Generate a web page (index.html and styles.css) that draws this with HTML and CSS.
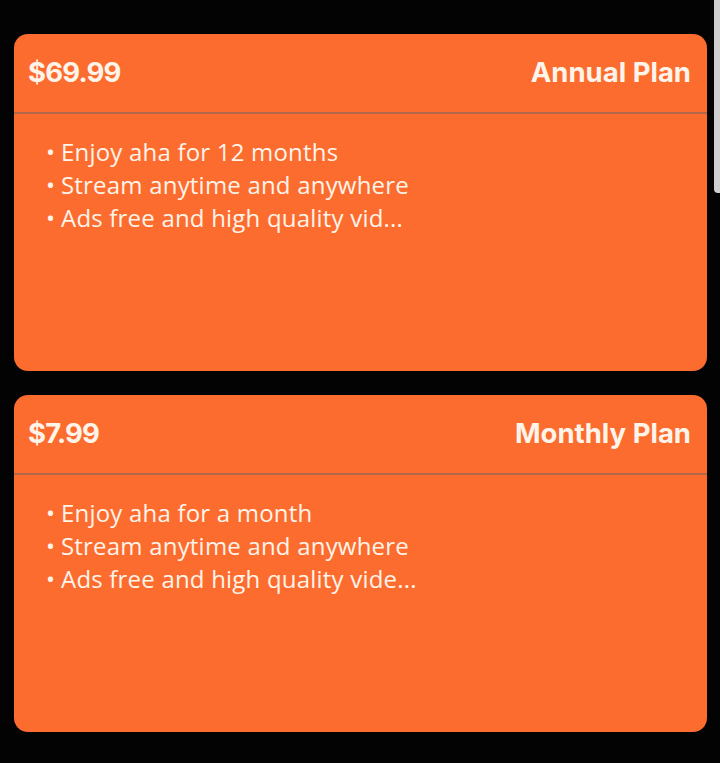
FILE: index.html
```html
<!DOCTYPE html>
<html lang="en">

<head>
    <meta charset="UTF-8">
    <meta name="viewport" content="width=device-width, initial-scale=1.0">
    <title>aha - Plans</title>
    <link rel="stylesheet" href="styles.css">
</head>

<body>
    <div class="plans">

        <!-- Annual -->
        <div class="plan">
            <div class="plan-head">
                <span class="price">$69.99</span>
                <span class="plan-name">Annual Plan</span>
            </div>
            <ul class="perks">
                <li>Enjoy aha for 12 months</li>
                <li>Stream anytime and anywhere</li>
                <li>Ads free and high quality vid...</li>
            </ul>
        </div>

        <!-- Monthly -->
        <div class="plan">
            <div class="plan-head">
                <span class="price">$7.99</span>
                <span class="plan-name">Monthly Plan</span>
            </div>
            <ul class="perks">
                <li>Enjoy aha for a month</li>
                <li>Stream anytime and anywhere</li>
                <li>Ads free and high quality vide...</li>
            </ul>
        </div>

    </div>

    <div class="scrollbar"></div>
</body>

</html>
```

FILE: styles.css
```css
body {
    margin: 0;
    padding: 0;
    background-color: #030303;
    font-family: "Open Sans", Arial, sans-serif;
}

.plans {
    display: flex;
    flex-direction: column;
    gap: 24px;
    padding: 34px 13px 0 14px;
}

.plan {
    background-color: #fd6c2f;
    border-radius: 14px;
    height: 337px;
    color: #fff4ea;
}

.plan-head {
    display: flex;
    justify-content: space-between;
    align-items: center;
    height: 76px;
    padding: 0 16px 2px 14px;
    border-bottom: 2px solid #b1674a;
    font-family: Inter, "Liberation Sans", sans-serif;
    font-weight: 700;
    font-size: 27.5px;
}

.price {
    letter-spacing: -0.8px;
}

.perks {
    list-style: none;
    margin: 0;
    padding: 21px 0 0 32px;
}

.perks li {
    font-size: 24px;
    line-height: 33px;
    letter-spacing: 0.2px;
}

.perks li::before {
    content: "\2022";
    display: inline-block;
    width: 15px;
}

.scrollbar {
    position: absolute;
    top: 0;
    right: 0;
    width: 6px;
    height: 193px;
    background-color: #cfcfcf;
    border-bottom-left-radius: 4px;
}
```
